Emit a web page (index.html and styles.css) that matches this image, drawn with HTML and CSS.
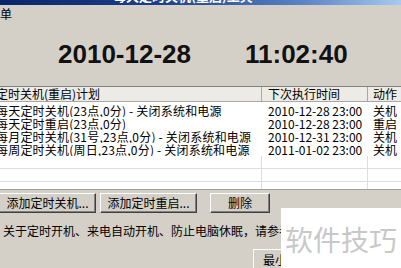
FILE: index.html
```html
<!DOCTYPE html>
<html>
<head>
<meta charset="utf-8">
<link rel="stylesheet" href="styles.css">
</head>
<body>
<div class="window">
  <div class="titlebar"><span class="title">每天定时关机(重启)工具</span></div>
  <div class="menubar"><span class="menu">菜单</span></div>
  <div class="clock">
    <span class="date">2010-12-28</span>
    <span class="time">11:02:40</span>
  </div>
  <div class="list">
    <div class="row head">
      <div class="c1">定时关机(重启)计划</div>
      <div class="c2">下次执行时间</div>
      <div class="c3">动作</div>
    </div>
    <div class="body">
      <div class="row">
        <div class="c1">每天定时关机(23点,0分) - 关闭系统和电源</div>
        <div class="c2">2010-12-28 23:00</div>
        <div class="c3">关机</div>
      </div>
      <div class="row">
        <div class="c1">每天定时重启(23点,0分)</div>
        <div class="c2">2010-12-28 23:00</div>
        <div class="c3">重启</div>
      </div>
      <div class="row">
        <div class="c1">每月定时关机(31号,23点,0分) - 关闭系统和电源</div>
        <div class="c2">2010-12-31 23:00</div>
        <div class="c3">关机</div>
      </div>
      <div class="row">
        <div class="c1">每周定时关机(周日,23点,0分) - 关闭系统和电源</div>
        <div class="c2">2011-01-02 23:00</div>
        <div class="c3">关机</div>
      </div>
      <div class="row empty"><div class="c1"></div><div class="c2"></div><div class="c3"></div></div>
      <div class="row empty"><div class="c1"></div><div class="c2"></div><div class="c3"></div></div>
      <div class="row empty"><div class="c1"></div><div class="c2"></div><div class="c3"></div></div>
    </div>
  </div>
  <div class="buttons">
    <button class="btn b1">添加定时关机...</button>
    <button class="btn b2">添加定时重启...</button>
    <button class="btn b3">删除</button>
  </div>
  <div class="note">关于定时开机、来电自动开机、防止电脑休眠，请参考帮助</div>
  <div class="bottom">
    <button class="btn bmin">最小化</button>
  </div>
  <div class="watermark">软件技巧</div>
</div>
</body>
</html>
```

FILE: styles.css
```css
html, body {
  margin: 0;
  padding: 0;
  overflow: hidden;
  background: #d4d0c8;
}
.window {
  position: relative;
  width: 401px;
  height: 268px;
  overflow: hidden;
  background: #d4d0c8;
  font-family: "Noto Sans CJK SC", "Liberation Sans", sans-serif;
  font-size: 12px;
  color: #000;
}
.titlebar {
  height: 5px;
  overflow: hidden;
  background: linear-gradient(to right, #0a246a 0%, #1d3f8a 40%, #5a82c4 75%, #a6caf0 100%);
}
.title {
  display: block;
  margin-left: 113px;
  margin-top: -11px;
  color: #fff;
  font-weight: bold;
  font-size: 13px;
  line-height: 14px;
}
.menubar {
  height: 18px;
  line-height: 18px;
}
.menu {
  display: inline-block;
  margin-left: -12px;
}
.clock {
  height: 47px;
  padding-top: 16px;
  display: flex;
  gap: 54px;
  padding-left: 58px;
  font-family: "Liberation Sans", Arial, sans-serif;
  font-weight: bold;
  font-size: 26px;
  line-height: 30px;
  color: #111;
}
.list {
  margin-left: -10px;
  width: 430px;
  height: 102px;
  background: #fff;
  border-top: 1px solid #808080;
  border-bottom: 1px solid #a0a0a0;
  overflow: hidden;
}
.row {
  display: flex;
  height: 13px;
  line-height: 13px;
  white-space: nowrap;
}
.row .c1 { width: 266px; padding-left: 6px; overflow: hidden; }
.row .c2 { width: 100px; padding-left: 6px; overflow: hidden; }
.row .c3 { flex: 1; padding-left: 5px; }
.body .row .c1 { letter-spacing: 0.2px; }
.row.head {
  height: 14px;
  line-height: 14px;
  background: #ecebe6;
  border-bottom: 1px solid #a8a8a8;
}
.row.head .c1, .row.head .c2 {
  width: 265px;
  border-right: 1px solid #a8a8a8;
}
.row.head .c2 { width: 99px; }
.body {
  padding-top: 2px;
}
.row.empty {
  border-bottom: 1px solid #dedede;
  height: 12px;
}
.row.empty .c1 { width: 265px; border-right: 1px solid #dedede; }
.row.empty .c2 { width: 99px; border-right: 1px solid #dedede; }
.buttons {
  display: flex;
  margin-top: 3px;
  margin-left: -1px;
  height: 20px;
}
.btn {
  box-sizing: border-box;
  height: 20px;
  padding: 0;
  margin: 0;
  background: #d4d0c8;
  font-family: "Noto Sans CJK SC", "Liberation Sans", sans-serif;
  font-size: 12px;
  line-height: 16px;
  color: #000;
  border: 1px solid;
  border-color: #ffffff #404040 #404040 #ffffff;
  box-shadow: inset -1px -1px 0 #808080;
}
.b1 { width: 97px; }
.b2 { width: 97px; margin-left: 4px; }
.b3 { width: 60px; margin-left: 13px; }
.note {
  margin-top: 11px;
  padding-left: 3px;
  height: 14px;
  line-height: 14px;
  white-space: nowrap;
}
.bottom {
  margin-top: 11px;
  padding-left: 253px;
}
.bmin {
  width: 56px;
  height: 22px;
}
.watermark {
  position: absolute;
  left: 281px;
  top: 208px;
  width: 120px;
  height: 60px;
  background: #fff;
  color: #c8c8c8;
  font-size: 28px;
  line-height: 62px;
  padding-left: 4px;
  box-sizing: border-box;
  white-space: nowrap;
}
```
